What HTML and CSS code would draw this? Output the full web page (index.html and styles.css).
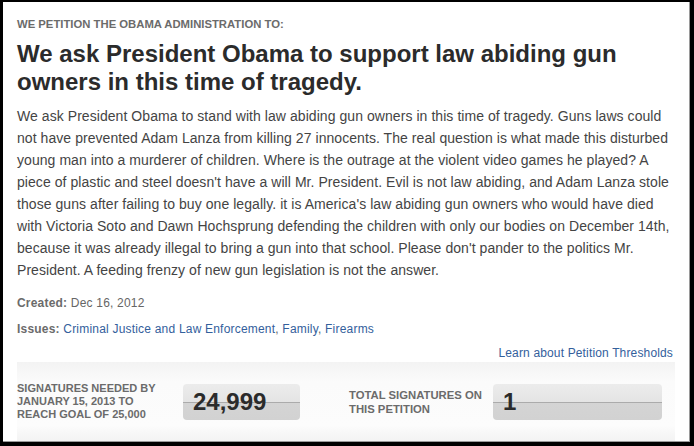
FILE: index.html
```html
<!DOCTYPE html>
<html lang="en">
<head>
    <meta charset="UTF-8">
    <title>We the People - Petition</title>
    <link rel="stylesheet" href="styles.css">
</head>
<body>
    <div class="frame">
        <div class="petition">
            <h3 class="kicker">We petition the Obama Administration to:</h3>
            <h1 class="title">We ask President Obama to support law abiding gun owners in this time of tragedy.</h1>
            <p class="body-text">We ask President Obama to stand with law abiding gun owners in this time of tragedy. Guns laws could not have prevented Adam Lanza from killing 27 innocents. The real question is what made this disturbed young man into a murderer of children. Where is the outrage at the violent video games he played? A piece of plastic and steel doesn't have a will Mr. President. Evil is not law abiding, and Adam Lanza stole those guns after failing to buy one legally. it is America's law abiding gun owners who would have died with Victoria Soto and Dawn Hochsprung defending the children with only our bodies on December 14th, because it was already illegal to bring a gun into that school. Please don't pander to the politics Mr. President. A feeding frenzy of new gun legislation is not the answer.</p>

            <p class="meta"><strong>Created:</strong> Dec 16, 2012</p>
            <p class="meta"><strong>Issues:</strong> <a href="#">Criminal Justice and Law Enforcement</a>, <a href="#">Family</a>, <a href="#">Firearms</a></p>

            <div class="threshold"><a href="#">Learn about Petition Thresholds</a></div>

            <div class="signatures">
                <div class="sig-group">
                    <div class="sig-label">Signatures needed by<br>January 15, 2013 to<br>reach goal of 25,000</div>
                    <div class="sig-count needed">24,999</div>
                </div>
                <div class="sig-group">
                    <div class="sig-label total-label">Total signatures on<br>this petition</div>
                    <div class="sig-count total">1</div>
                </div>
            </div>
        </div>
    </div>
</body>
</html>
```

FILE: styles.css
```css
html, body {
    margin: 0;
    padding: 0;
    height: 100%;
}
body {
    font-family: "Liberation Sans", Arial, sans-serif;
    background: #000;
}
/* window frame round the page */
.frame {
    box-sizing: border-box;
    height: 446px;
    border-top: 2px solid #000;
    border-left: 3px solid #000;
    border-right: 4px solid #000;
    border-bottom: 4px solid #000;
    background: #fff;
    box-shadow: inset -1px -1px 0 #9a9a9a;
}
.petition {
    padding: 14px 17px 0 14px;
}
.kicker {
    margin: 0;
    font-size: 11.3px;
    line-height: 16px;
    font-weight: bold;
    text-transform: uppercase;
    color: #6b6b6b;
}
.title {
    margin: 8px 0 0;
    font-size: 24px;
    line-height: 28px;
    font-weight: bold;
    color: #2b2b2b;
}
.body-text {
    margin: 9px 0 0;
    font-size: 14px;
    line-height: 22px;
    letter-spacing: 0.06px;
    color: #444;
}
.meta {
    margin: 14px 0 0;
    font-size: 12px;
    line-height: 16px;
    letter-spacing: 0.2px;
    color: #666;
}
.meta + .meta {
    margin-top: 10px;
}
.meta strong {
    color: #6b6b6b;
}
a {
    color: #33609c;
    text-decoration: none;
}
.threshold {
    text-align: right;
    font-size: 12px;
    line-height: 16px;
    letter-spacing: 0.15px;
    margin-top: 8px;
}
/* signature counters */
.signatures {
    display: flex;
    align-items: center;
    height: 79px;
    margin-top: 1px;
    margin-right: -2px;
    background: linear-gradient(to bottom, #f3f3f3 0%, #fbfbfb 25%, #fcfcfc 80%, #f3f3f3 100%);
}
.sig-group {
    display: flex;
    align-items: center;
}
.sig-label {
    width: 166px;
    font-size: 11px;
    line-height: 13px;
    font-weight: bold;
    text-transform: uppercase;
    color: #6b6b6b;
}
.sig-group + .sig-group {
    margin-left: 49px;
}
.total-label {
    width: 144px;
    font-size: 11.3px;
    line-height: 14px;
}
.sig-count {
    box-sizing: border-box;
    height: 36px;
    padding-left: 10px;
    border-radius: 4px;
    background: linear-gradient(to bottom, #ececec 0%, #e4e4e4 50%, #ababab 50%, #ababab 53%, #d4d4d4 53%, #d2d2d2 100%);
    font-size: 24px;
    line-height: 36px;
    font-weight: bold;
    color: #2b2b2b;
}
.needed {
    width: 117px;
}
.total {
    width: 169px;
}
```
